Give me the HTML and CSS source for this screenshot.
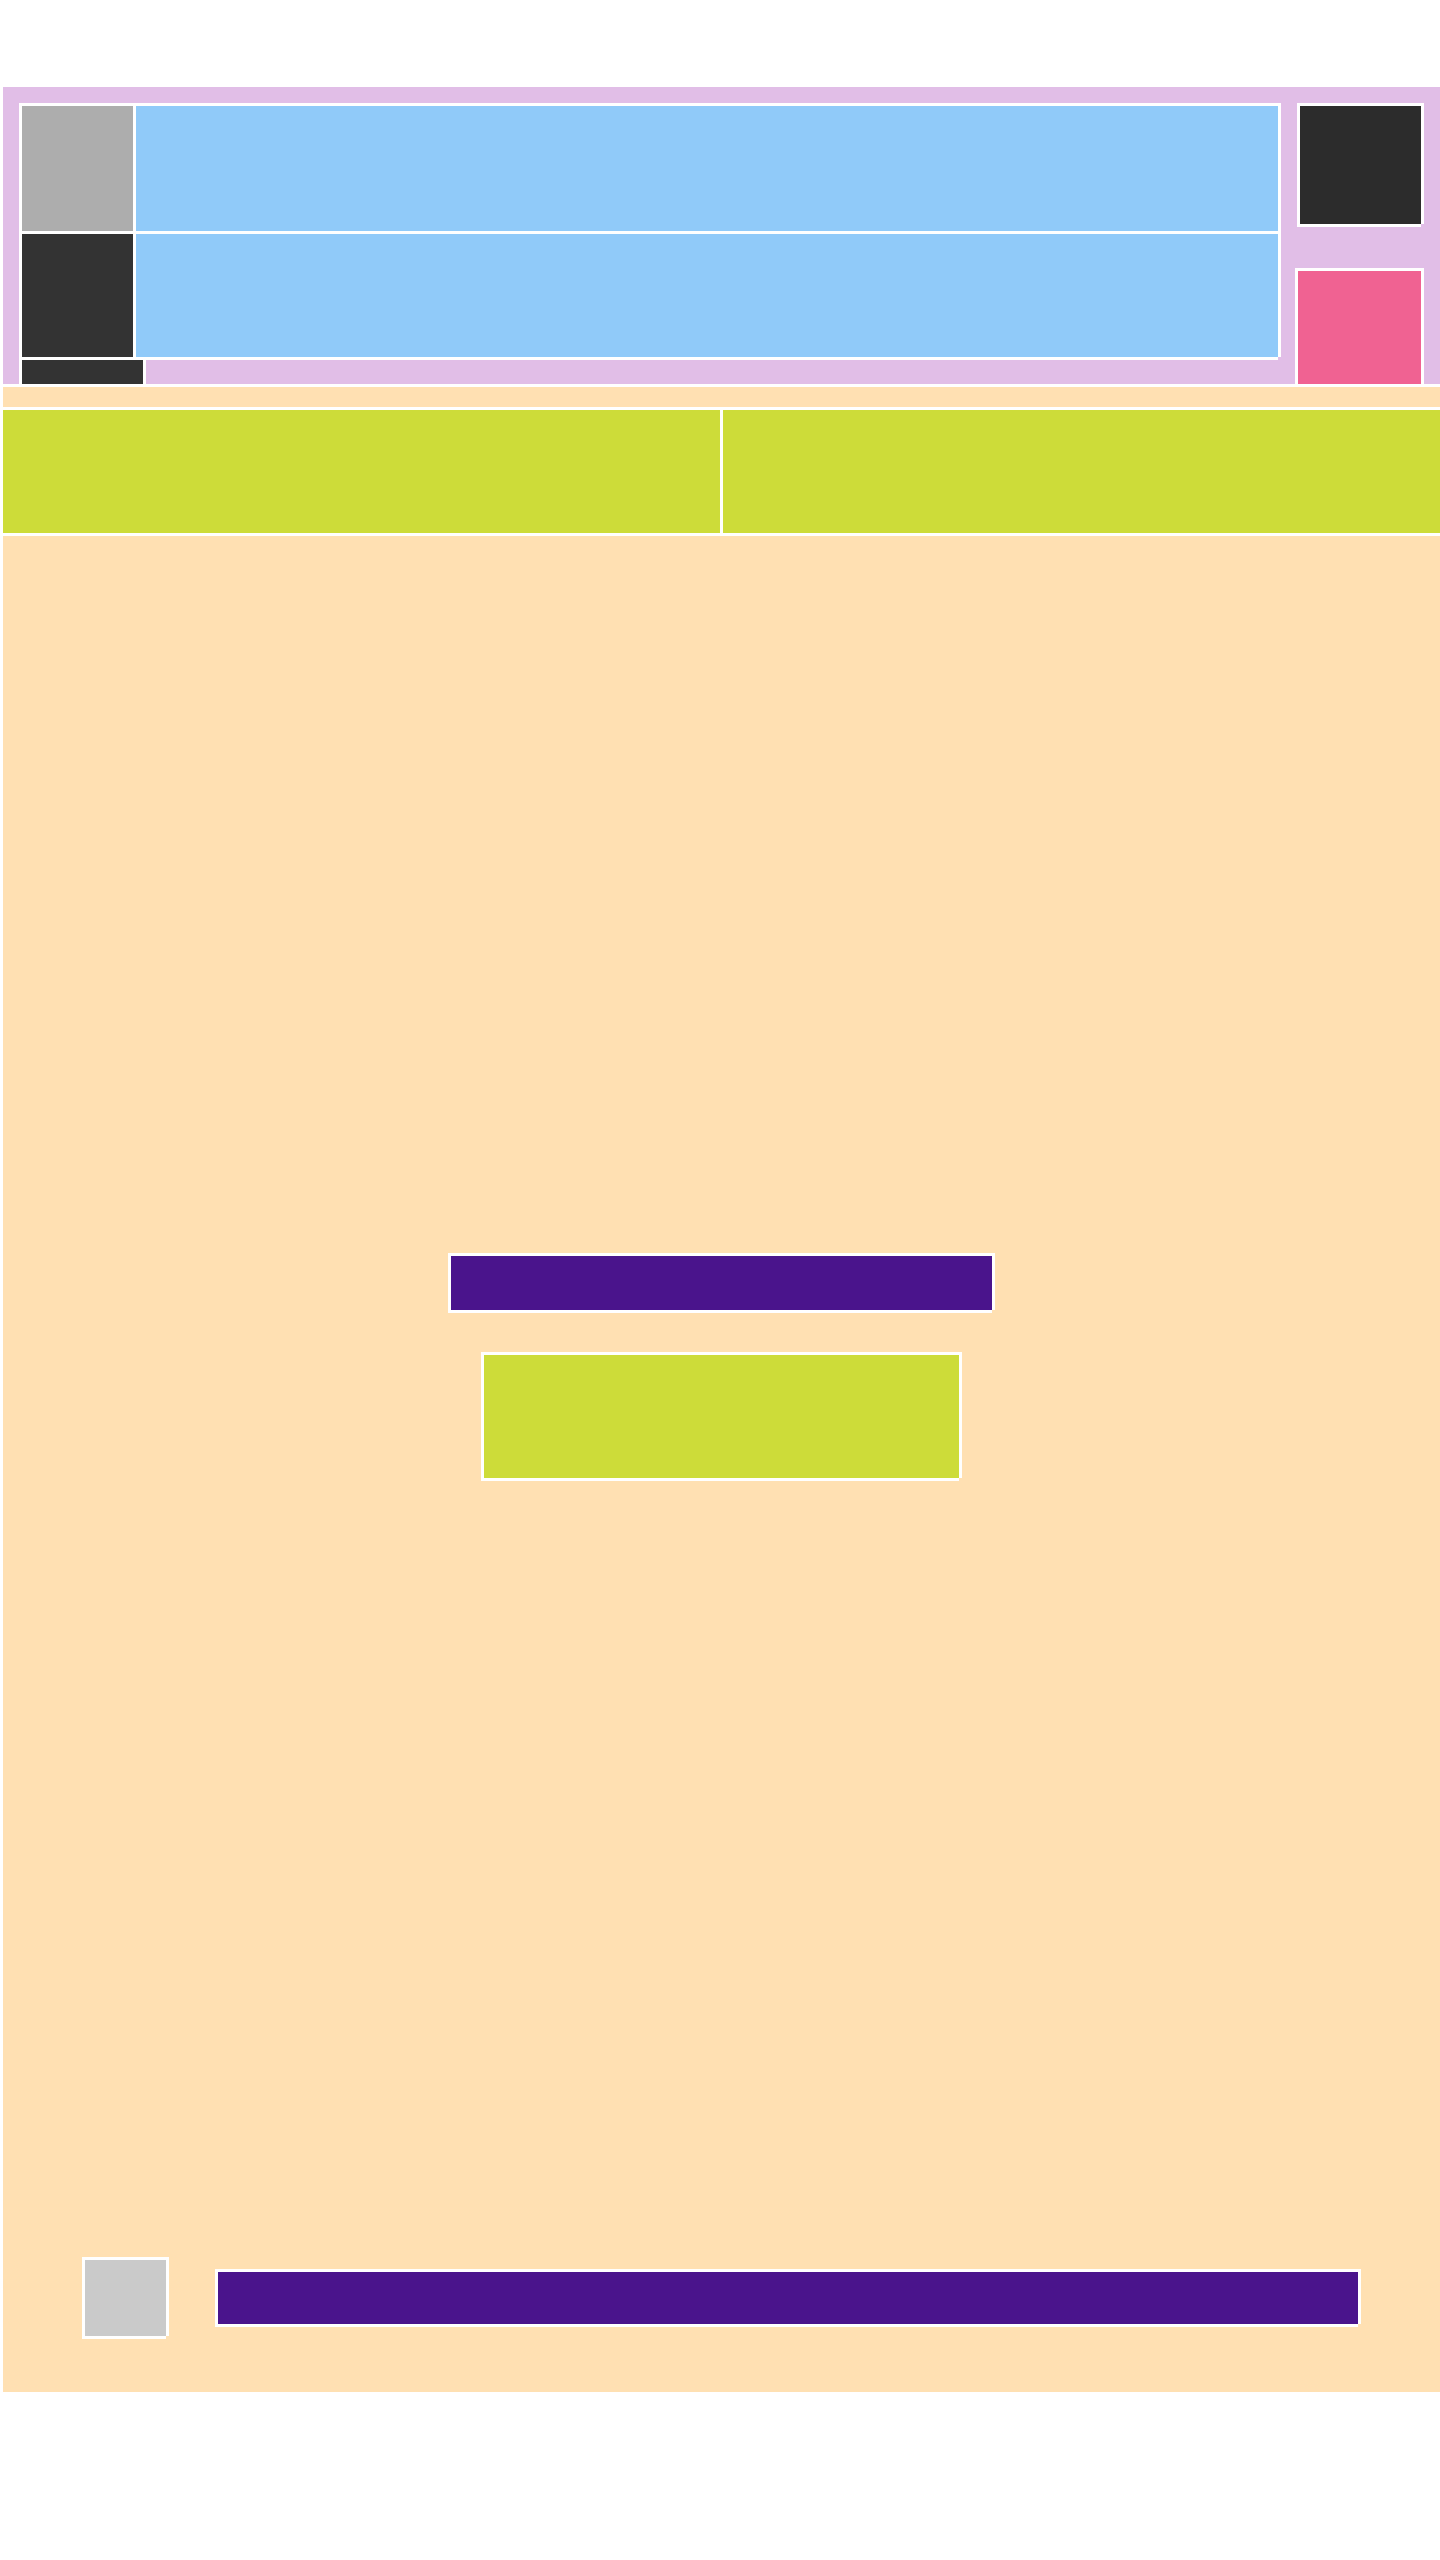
FILE: index.html
```html
<!DOCTYPE html>
<html lang="en">
<head>
    <meta charset="UTF-8">
    <meta name="viewport" content="width=device-width, initial-scale=1.0">
    <title>Layout</title>
    <link rel="stylesheet" href="styles.css">
</head>
<body>
    <div class="page">
        <header class="top">
            <div class="top-left">
                <div class="tile-grid cell">
                    <div class="thumb thumb-grey"></div>
                    <div class="line-box"></div>
                    <div class="thumb thumb-dark"></div>
                    <div class="line-box"></div>
                </div>
                <div class="cell small-dark"></div>
            </div>
            <div class="top-right">
                <div class="cell avatar"></div>
                <div class="cell badge-box"></div>
            </div>
        </header>

        <main class="content">
            <div class="split">
                <div class="split-half"></div>
                <div class="split-half"></div>
            </div>

            <div class="center">
                <div class="cell title-bar"></div>
                <div class="cell action-box"></div>
            </div>

            <div class="footer-row">
                <div class="cell footer-icon"></div>
                <div class="cell footer-bar"></div>
            </div>
        </main>
    </div>
</body>
</html>
```

FILE: styles.css
```css
body {
    margin: 0;
    background-color: #fff;
    font-family: "Liberation Sans", Arial, sans-serif;
}

.page {
    padding: 87px 0 0 3px;
}

/* white edge on every block: left/top border, right/bottom shadow */
.cell {
    box-sizing: border-box;
    border-left: 3px solid #fff;
    border-top: 3px solid #fff;
    box-shadow: 3px 0 0 #fff, 0 3px 0 #fff;
}

.top {
    box-sizing: border-box;
    height: 297px;
    padding: 16px 16px 0 16px;
    background-color: #e1bee7;
    display: flex;
    justify-content: space-between;
    overflow: hidden;
}

.top-left {
    width: 1259px;
    display: flex;
    flex-direction: column;
}

.tile-grid {
    display: grid;
    grid-template-columns: 111px 1fr;
    grid-template-rows: 125px 123px;
    gap: 3px;
    flex-shrink: 0;
    background-color: #fff;
}

.thumb-grey {
    background-color: #adadad;
}

.thumb-dark {
    background-color: #333;
}

.line-box {
    background-color: #90caf9;
}

.small-dark {
    width: 124px;
    height: 60px;
    flex-shrink: 0;
    background-color: #333;
}

.top-right {
    width: 126px;
    margin-right: 3px;
    display: flex;
    flex-direction: column;
    align-items: flex-end;
    gap: 44px;
}

.avatar {
    width: 124px;
    height: 121px;
    flex-shrink: 0;
    background-color: #2c2c2c;
}

.badge-box {
    width: 126px;
    height: 130px;
    flex-shrink: 0;
    background-color: #f06292;
}

.content {
    box-sizing: border-box;
    height: 2005px;
    margin-top: 3px;
    padding: 20px 0 56px 0;
    background-color: #ffe0b2;
    display: flex;
    flex-direction: column;
}

.split {
    display: grid;
    grid-template-columns: 1fr 1fr;
    gap: 3px;
    height: 123px;
    background-color: #fff;
    border-top: 3px solid #fff;
    border-bottom: 3px solid #fff;
}

.split-half {
    background-color: #cddc39;
}

.center {
    margin-top: 717px;
    display: flex;
    flex-direction: column;
    align-items: center;
}

.title-bar {
    width: 544px;
    height: 57px;
    margin-right: 3px;
    background-color: #4a148c;
}

.action-box {
    width: 478px;
    height: 126px;
    margin-top: 42px;
    margin-right: 3px;
    background-color: #cddc39;
}

.footer-row {
    margin-top: auto;
    padding: 0 82px 0 79px;
    display: flex;
    align-items: center;
    gap: 49px;
}

.footer-icon {
    width: 84px;
    height: 79px;
    flex-shrink: 0;
    background-color: #cacaca;
}

.footer-bar {
    flex: 1;
    height: 55px;
    background-color: #4a148c;
}
```
